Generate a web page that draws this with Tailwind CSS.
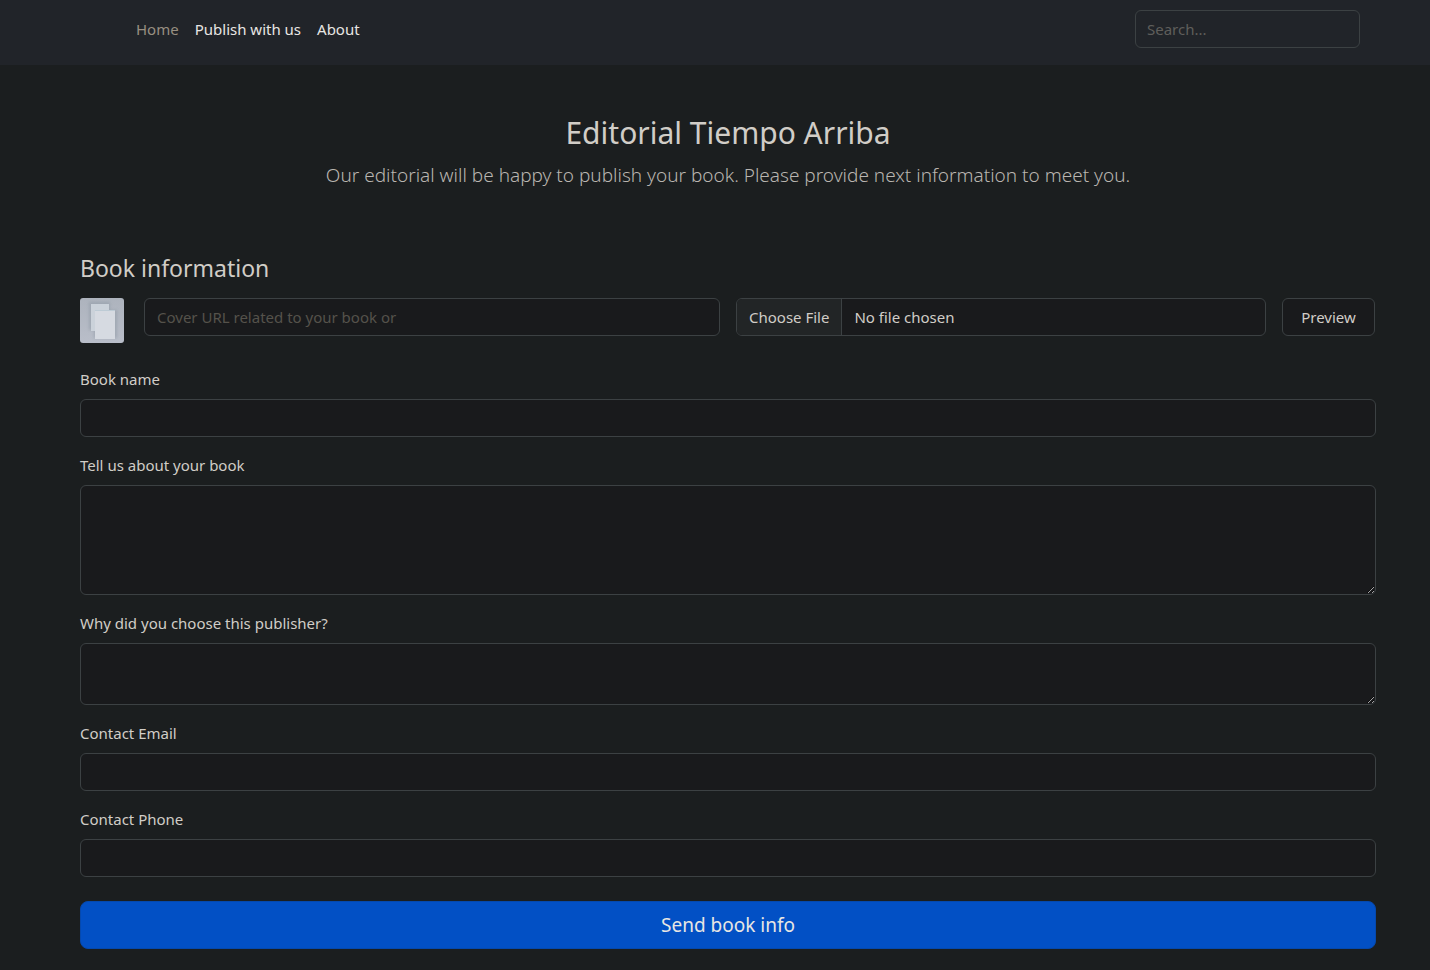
<!DOCTYPE html>
<html lang="en">
<head>
<meta charset="utf-8">
<meta name="viewport" content="width=device-width, initial-scale=1">
<title>Editorial Tiempo Arriba</title>
<script src="https://cdn.jsdelivr.net/npm/@tailwindcss/browser@4"></script>
</head>
<body class="min-h-screen bg-[#1b1e1f] font-['Noto_Sans',sans-serif] text-[15px] leading-6 text-[#d1cdc7]">
<header class="flex h-[65px] items-start justify-between bg-[#212429] pt-[10px] pr-[70px] pl-32">
  <nav class="flex">
    <a href="#" class="px-2 py-[7px] text-[#988f81]">Home</a>
    <a href="#" class="px-2 py-[7px] text-[#e8e6e3]">Publish with us</a>
    <a href="#" class="px-2 py-[7px] text-[#e8e6e3]">About</a>
  </nav>
  <input type="search" aria-label="Search" placeholder="Search..." class="h-[38px] w-[225px] rounded-md border border-[#3c4143] bg-transparent px-[11px] placeholder:text-[#5f5e5b]">
</header>
<main class="pt-12 pr-[54px] pb-5 pl-20">
  <div class="text-center">
    <h1 class="text-[30px] leading-10">Editorial Tiempo Arriba</h1>
    <p class="mt-[7px] text-[19px] leading-[30px] font-light text-[#b9b5b0]">Our editorial will be happy to publish your book. Please provide next information to meet you.</p>
  </div>
  <form class="mt-[62px]">
    <h2 class="text-[23px] leading-8">Book information</h2>
    <div class="mt-[14px] flex items-start gap-4">
      <svg class="mr-1 h-[45px] w-11 shrink-0 rounded-[3px]" viewBox="0 0 44 45" role="img" aria-label="Book cover">
        <defs>
          <linearGradient id="bg" x1="0" y1="0" x2="0" y2="1"><stop offset="0" stop-color="#adb3bd"/><stop offset="1" stop-color="#b9bec9"/></linearGradient>
          <filter id="soft" x="-30%" y="-30%" width="160%" height="160%"><feGaussianBlur stdDeviation="1.6"/></filter>
        </defs>
        <rect width="44" height="45" fill="url(#bg)"/>
        <path d="M9 4h21v8h7v28H14v-8H9z" fill="#939da8" opacity=".6" filter="url(#soft)"/>
        <rect x="11" y="6" width="18" height="27" fill="#cbd2da"/>
        <rect x="15" y="12" width="20" height="29" fill="#d6dae1"/>
        <path d="M15 12.500h20" stroke="#bdcbd5"/>
      </svg>
      <input type="text" aria-label="Cover URL" placeholder="Cover URL related to your book or" class="h-[38px] min-w-0 grow basis-[576px] rounded-md border border-[#3c4143] bg-[#191a1c] px-3 placeholder:text-[#55524b]">
      <input type="file" aria-label="Cover file" class="h-[38px] min-w-0 grow basis-[530px] overflow-hidden rounded-md border border-[#3c4143] bg-[#191a1c] leading-6 file:mr-3 file:h-9 file:border-r file:border-[#3c4143] file:bg-[#222526] file:px-3">
      <button type="button" class="mr-px h-[38px] w-[93px] shrink-0 rounded-md border border-[#3c4143] bg-[#191a1c]">Preview</button>
    </div>
    <div class="mt-6 flex flex-col gap-4">
      <div class="flex flex-col gap-2">
        <label for="name">Book name</label>
        <input id="name" type="text" class="h-[38px] rounded-md border border-[#3c4143] bg-[#191a1c] px-3">
      </div>
      <div class="flex flex-col gap-2">
        <label for="about">Tell us about your book</label>
        <textarea id="about" rows="4" class="rounded-md border border-[#3c4143] bg-[#191a1c] px-3 py-[6px]"></textarea>
      </div>
      <div class="flex flex-col gap-2">
        <label for="why">Why did you choose this publisher?</label>
        <textarea id="why" rows="2" class="rounded-md border border-[#3c4143] bg-[#191a1c] px-3 py-[6px]"></textarea>
      </div>
      <div class="flex flex-col gap-2">
        <label for="email">Contact Email</label>
        <input id="email" type="email" class="h-[38px] rounded-md border border-[#3c4143] bg-[#191a1c] px-3">
      </div>
      <div class="flex flex-col gap-2">
        <label for="phone">Contact Phone</label>
        <input id="phone" type="tel" class="h-[38px] rounded-md border border-[#3c4143] bg-[#191a1c] px-3">
      </div>
    </div>
    <button type="submit" class="mt-6 h-12 w-full rounded-lg border border-[#0549ae] bg-[#0250c5] text-[19px] text-[#e8e6e3]">Send book info</button>
  </form>
</main>
</body>
</html>
